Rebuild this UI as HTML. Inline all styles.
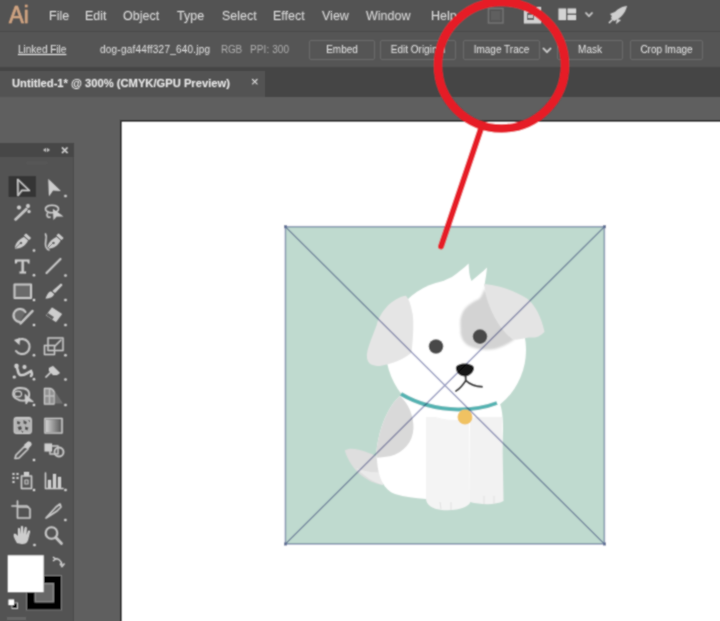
<!DOCTYPE html>
<html><head><meta charset="utf-8">
<style>
*{margin:0;padding:0;box-sizing:border-box}
html,body{width:720px;height:621px;overflow:hidden;background:#5f5f5f;font-family:"Liberation Sans",sans-serif}
.abs{position:absolute}
#menubar{left:0;top:0;width:720px;height:31px;background:#535353}
#menubar .m{position:absolute;top:9px;font-size:12.5px;color:#d6d6d6}
#ctrl{left:0;top:31px;width:720px;height:38px;background:#545454;border-top:1px solid #4a4a4a;border-bottom:1px solid #474747}
#ctrl .t{position:absolute;font-size:10px;color:#d8d8d8;top:12px;white-space:nowrap}
.btn{position:absolute;top:8px;height:20px;border:1px solid #6a6a6a;border-radius:2px;font-size:10px;color:#dcdcdc;text-align:center;line-height:18px;white-space:nowrap}
#tabbar{left:0;top:67px;width:720px;height:30px;background:#454545}
#tab{left:0;top:71px;width:265px;height:26px;background:#535353}
#artboard{left:120px;top:120px;width:600px;height:501px;background:#ffffff;border-left:2px solid #353535;border-top:2px solid #353535}
#panel{left:0;top:143px;width:74px;height:478px;background:#535353;border-right:1px solid #4c4c4c}
#phead{left:0;top:143px;width:74px;height:14px;background:#464646}
svg{position:absolute;left:0;top:0}
</style></head><body><svg width="0" height="0" style="position:absolute"><filter id="cm" x="0" y="0" width="100%" height="100%"><feConvolveMatrix order="3" kernelMatrix="1 2 1 2 8 2 1 2 1" divisor="20" edgeMode="duplicate"/></filter></svg><div id="wrap" style="position:absolute;left:0;top:0;width:720px;height:621px;filter:url(#cm)">
<div id="artboard" class="abs"></div>
<div id="menubar" class="abs">
  <div class="abs" style="left:9px;top:2px;font-size:23px;color:#d0a482;transform:scaleX(0.96);transform-origin:0 0;-webkit-text-stroke:0.6px #d0a482">Ai</div>
  <div class="m" style="left:49px">File</div>
  <div class="m" style="left:85px">Edit</div>
  <div class="m" style="left:123px">Object</div>
  <div class="m" style="left:177px">Type</div>
  <div class="m" style="left:222px">Select</div>
  <div class="m" style="left:273px">Effect</div>
  <div class="m" style="left:322px">View</div>
  <div class="m" style="left:366px">Window</div>
  <div class="m" style="left:431px">Help</div>
</div>
<div id="ctrl" class="abs">
  <div class="t" style="left:18px;text-decoration:underline">Linked File</div>
  <div class="t" style="left:100px;letter-spacing:0.22px">dog-gaf44ff327_640.jpg</div>
  <div class="t" style="left:221px;color:#a8a8a8;letter-spacing:-0.3px">RGB</div>
  <div class="t" style="left:250px;color:#a8a8a8;letter-spacing:0.1px">PPI: 300</div>
  <div class="btn" style="left:309px;width:66px">Embed</div>
  <div class="btn" style="left:380px;width:76px">Edit Original</div>
  <div class="btn" style="left:463px;width:77px">Image Trace</div>
  <div class="abs" style="left:541px;top:13px;width:12px;height:10px"><svg width="12" height="10" style="position:absolute;left:0;top:0"><path d="M2,3 L6,7 L10,3" fill="none" stroke="#d0d0d0" stroke-width="1.6"/></svg></div>
  <div class="btn" style="left:557px;width:66px">Mask</div>
  <div class="btn" style="left:630px;width:73px">Crop Image</div>
</div>
<div id="tabbar" class="abs"></div>
<div id="tab" class="abs">
  <div class="abs" style="left:12px;top:6px;font-size:11.2px;font-weight:bold;color:#e6e6e6;white-space:nowrap">Untitled-1* @ 300% (CMYK/GPU Preview)</div>
  <div class="abs" style="left:251px;top:3px;font-size:13px;color:#e0e0e0">×</div>
</div>
<div id="panel" class="abs"></div>
<div id="phead" class="abs"></div>
<svg width="720" height="621" viewBox="0 0 720 621">
 <g fill="none" stroke="#c8c8c8" stroke-width="1.5" stroke-linejoin="round" stroke-linecap="round">
 <!-- header icons -->
 <path d="M43,150 l3,-2 v4 z M50,150 l-3,-2 v4 z" fill="#bdbdbd" stroke="none"/>
 <path d="M62,147.5 l5.5,5.5 M67.5,147.5 l-5.5,5.5" stroke="#d0d0d0" stroke-width="1.5" stroke-linecap="butt"/>
 <!-- grip -->
 <path d="M27,163 h20" stroke="#616161" stroke-width="1"/>
 </g>
 <rect x="8.5" y="176" width="27.5" height="21" fill="#363636"/>
 <g fill="none" stroke="#c4c4c4" stroke-width="1.6" stroke-linejoin="round" stroke-linecap="round">
  <!-- selection -->
  <path d="M17.8,179.5 L29.3,190.5 L22,190.3 L18,195.5 Z"/>
  <!-- magic wand -->
  <path d="M15.5,219.5 L26.5,209" stroke-width="2.5"/>
  <!-- lasso -->
  <ellipse cx="52" cy="209" rx="6.5" ry="3.8"/>
  <path d="M47.5,213 C46,216 48,218 50,217"/>
  <!-- pen curvature squiggle -->
  <path d="M45.5,234 C48,238 44,242 46,247 C47,249 48,250 49,250"/>
  <!-- line -->
  <path d="M46.5,273 L60.5,259" stroke-width="2"/>
  <!-- rect -->
  <rect x="14.5" y="284.5" width="16.5" height="13.5" fill="#6a6a6a" stroke-width="2"/>
  <!-- shaper -->
  <path d="M25.5,312 A6.5,6.5 0 1 0 20,322" stroke-width="2" fill="#6a6a6a"/>
  <path d="M20.5,323.5 L32.5,311" stroke-width="2.4"/>
  <!-- rotate -->
  <path d="M17,341 A7.5,7.5 0 1 1 16,351" stroke-width="2"/>
  <!-- scale -->
  <rect x="48" y="338" width="15" height="12.5" stroke-width="1.5"/>
  <rect x="44.5" y="345.5" width="10" height="9" stroke-width="1.5"/>
  <path d="M55,346 L61,340" stroke-width="1.5"/>
  <!-- shape builder -->
  <path d="M20,388 C12,388 11,396 17,399 C22,402 28,401 29,396 C30,391 27,388 20,388 Z" stroke-width="1.8"/><ellipse cx="18" cy="394" rx="3.5" ry="2.8" stroke-width="1.2"/>
  <!-- perspective grid -->
  <path d="M54,390 L63,403.5 H54 Z" fill="#727272" stroke="none"/><path d="M44.5,388.5 H50 Q53,389 54,392 V404 H44.5 Z M44.5,396 H54 M49.5,389 V404" stroke-width="1.4"/>
  <!-- mesh -->
  <rect x="14.5" y="418" width="16.5" height="15" rx="2" stroke-width="1.8"/>
  
  <!-- gradient -->
  <rect x="45" y="418.5" width="17" height="14.5" stroke-width="1.6"/>
  <!-- eyedropper -->
  <path d="M15,458.5 L16,455 L25,446 L28,449 L19,458 Z" stroke-width="1.6"/>
  <!-- blend -->
  <circle cx="59" cy="452" r="4.5" stroke-width="1.8"/>
  <rect x="50" y="446" width="8" height="8" stroke-width="1.5"/>
  <!-- symbol sprayer -->
  <rect x="21.5" y="476" width="10" height="12.5" stroke-width="1.6"/>
  <rect x="25" y="480" width="3" height="4" stroke-width="1.2"/>
  <!-- column graph -->
  <path d="M45.5,473 V488.5 H63" stroke-width="1.5"/>
  <!-- artboard -->
  <path d="M17.5,501 V518 H30 V509 L27,506 H12" stroke-width="1.6"/>
  <path d="M17.5,507 H28" stroke-width="1.6"/>
  <!-- knife -->
  <path d="M46,518 L56,507 L60,504 L61,507 L57,511 Z" stroke-width="1.6"/>
  <!-- zoom -->
  <circle cx="51.5" cy="533" r="5.8" stroke-width="2"/>
  <path d="M55.8,537.5 L61.5,543.5" stroke-width="2.6"/>
 </g>
 <g fill="#cdcdcd" stroke="none">
  <!-- direct selection -->
  <path d="M48.3,179 L60.8,191 L53,190.5 L49,196.3 Z"/>
  <!-- wand sparkles -->
  <circle cx="19" cy="207.5" r="1.9"/><circle cx="28" cy="206" r="1.9"/><circle cx="29" cy="211.5" r="1.6"/>
  <!-- lasso arrow -->
  <path d="M53,209 L53.5,220 L56.5,216.5 L63.5,216.5 Z"/>
  <!-- pen -->
  <path d="M15,248.5 C15,244 18,240 24,237 L28,240.5 C25,246 21,248.5 15,248.5 Z"/>
  <path d="M24,235.5 L26,233.5 L31,238 L29,240 Z"/>
  <path d="M47.5,248.5 C47.5,244 50.5,240 56.5,237 L60.5,240.5 C57.5,246 53.5,248.5 47.5,248.5 Z"/>
  <path d="M56.5,235.5 L58.5,233.5 L63.5,238 L61.5,240 Z"/>
  <circle cx="21" cy="243" r="1.3" fill="#555"/><path d="M15.5,248 L20.5,243" stroke="#555" stroke-width="0.8"/>
  <circle cx="53.5" cy="243" r="1.3" fill="#555"/><path d="M48,248 L53,243" stroke="#555" stroke-width="0.8"/>
  <!-- T -->
  <path d="M15,259.5 H29.5 V263.5 H28 L27.3,261.5 H23.8 V271.5 H26 V273.5 H19.5 V271.5 H21.5 V261.5 H17.5 L16.5,263.5 H15 Z"/>
  <!-- paintbrush -->
  <path d="M61,283.5 L62.5,285 L55,293 L52.5,291 Z"/>
  <path d="M45.5,298.5 C47,296 48,292 51,291.5 L54,294 C53.5,297 49,298.5 45.5,298.5 Z"/>
  <!-- eraser -->
  <path d="M52,307.5 L62,314 L56,322 L46,315.5 Z"/>
  <path d="M48,313 L54,317 L52.5,319.5 L46.5,315.5 Z" fill="#5a5a5a"/>
  <!-- rotate arrowhead -->
  <path d="M14,340 L20,338 L19.5,345 Z"/>
  <!-- puppet warp -->
  <path d="M16.5,366.5 C18,369 17.5,372.5 19.5,374.5 C23,377 27,373 31,371 C32,373 32,375 31,376" fill="none" stroke="#cdcdcd" stroke-width="2.4" stroke-linecap="round"/><circle cx="16.5" cy="366" r="2.2"/><circle cx="24.5" cy="367" r="2"/><circle cx="14.3" cy="377" r="1.6"/>
  <!-- pin -->
  <path d="M53,366 L60,373 L57,375 L53,375 L49,371 L49,368 Z"/>
  <path d="M51,372 L45.5,377.5" stroke="#cdcdcd" stroke-width="1.6"/>
  <!-- shape builder arrow -->
  <path d="M25,394.5 L26,404 L28.3,401 L33.3,401.7 Z" stroke="#cdcdcd" stroke-width="0.8"/>
  <!-- perspective grid fill -->
  <path d="M45,389 H53 V404 H45 Z" fill="#b8b8b8" opacity="0.6"/>
  <!-- mesh fill -->
  
  <!-- eyedropper head -->
  <path d="M24,445 L28,441.5 C30,441 32,443 31.5,445 L28,449 Z"/>
  <!-- blend filled square -->
  <rect x="44.5" y="443.5" width="7.5" height="8"/>
  <!-- sprayer dots -->
  <rect x="12.5" y="473" width="2" height="2"/><rect x="16.5" y="473" width="2" height="2"/><rect x="12.5" y="477" width="2" height="2"/><rect x="16.5" y="477" width="2" height="2"/><rect x="12.5" y="481" width="2" height="2"/>
  <rect x="24" y="472" width="5" height="4"/>
  <!-- column bars -->
  <rect x="48" y="480" width="3" height="8.5"/><rect x="53" y="474" width="3" height="14.5"/><rect x="58" y="477" width="3" height="11.5"/>
  <!-- hand -->
  <path d="M17,543 C15,539 13,536 14,534 C15,533 17,535 18,536 L18,529 C18,527.5 20,527.5 20,529 L20.5,534 L21,527 C21,525.5 23,525.5 23,527 L23.5,534 L24.5,528 C25,526.5 27,527 26.8,528.5 L26.5,535 L28,531 C28.5,530 30.5,530.5 30,532 L28,540 C27,543 25,544 22,544 Z"/>
  <!-- small triangle markers -->
  <circle cx="34" cy="250.5" r="1.3"/><circle cx="65.5" cy="196" r="1.3"/>
  <circle cx="34" cy="275.3" r="1.3"/><circle cx="65.5" cy="275.5" r="1.3"/>
  <circle cx="34" cy="300" r="1.3"/><circle cx="65.5" cy="300" r="1.3"/>
  <circle cx="34" cy="325" r="1.3"/><circle cx="65.5" cy="325" r="1.3"/>
  <circle cx="34" cy="355.3" r="1.3"/><circle cx="65.5" cy="355.3" r="1.3"/>
  <circle cx="34" cy="379.2" r="1.3"/><circle cx="65.5" cy="379.5" r="1.3"/>
  <circle cx="34" cy="405" r="1.3"/><circle cx="65.5" cy="405" r="1.3"/>
  <circle cx="34" cy="460" r="1.3"/>
  <circle cx="34" cy="490" r="1.3"/><circle cx="65.5" cy="490" r="1.3"/>
  <circle cx="65.4" cy="520" r="1.3"/><circle cx="34.5" cy="545" r="1.3"/>
 </g>
 <defs><linearGradient id="gr" x1="0" x2="1" y1="0" y2="0"><stop offset="0" stop-color="#d0d0d0"/><stop offset="1" stop-color="#5a5a5a"/></linearGradient></defs>
 <rect x="46" y="419.5" width="15" height="12.5" fill="url(#gr)"/>
 <!-- fill/stroke -->
 <rect x="26" y="575" width="36" height="35.5" fill="#7a7a7a"/>
 <rect x="27" y="576" width="34" height="33.5" fill="#000000"/>
 <rect x="34.5" y="583" width="19.5" height="19.5" fill="#858585"/>
 <rect x="36" y="584.5" width="16.5" height="16.5" fill="#676767"/>
 <rect x="7.5" y="555" width="36.5" height="37.5" fill="#8a8a8a"/>
 <rect x="8" y="555.5" width="35.5" height="36.5" fill="#ffffff"/>
 <path d="M54,559 C58,558 61,560 62,565 M60,563.5 L62,566.5 L64.5,563.5 M53,557 L55.5,559 L53,561" stroke="#c8c8c8" stroke-width="1.4" fill="none"/>
 <rect x="12" y="603" width="5.5" height="5.5" fill="#111" stroke="#bbb" stroke-width="1"/>
 <rect x="8.5" y="599.5" width="5.5" height="5.5" fill="#fff"/>
 
<rect x="7" y="617" width="19" height="3" fill="#666"/>
<rect x="15" y="419" width="15.5" height="13.5" fill="#b4b4b4"/>
 <path d="M17,421 l3.5,1 l-1,2.5 l-2.5,-0.5 z M23.5,420 l3.5,2 l-1,2.5 l-2.5,-1 z M17.5,427 l3.5,-1 l1,3 l-3,1.5 z M25,426.5 l3.5,1 l-1,3 l-2.5,-1 z M21,430.5 l2.5,1 l-1,1.5 z M28,420 l2,0.5 v2 z" fill="#4e4e4e"/>
</svg>

<svg width="720" height="621" viewBox="0 0 720 621"><defs><clipPath id="bc"><path d="M401,395 C391,403 382,420 378,441 C376,450 376.5,455 377,460 C378,478 384,490 395,494 C405,497 415,498 426,499 L500,501 L503,430 C503,412 501,404 497,398 Z"/></clipPath><filter id="fz" x="-10%" y="-10%" width="120%" height="120%"><feGaussianBlur stdDeviation="1"/></filter></defs>
 <rect x="285.4" y="226.7" width="319" height="317.3" fill="#bfdacf"/>
 <!-- tail -->
 <path d="M344.8,450.5 C352,446 365,451 378,457 L383,485 C368,483 351,471 344.8,450.5 Z" fill="#dedede"/>
 <path d="M356,468 C364,476 373,482 383,485 L381,472 C372,473 363,471 356,468 Z" fill="#eaeaea"/>
 <!-- body -->
 <path d="M401,395 C391,403 382,420 378,441 C376,450 376.5,455 377,460 C378,478 384,490 395,494 C405,497 415,498 426,499 L500,501 L503,430 C503,412 501,404 497,398 Z" fill="#ffffff"/>
 <!-- haunch patch -->
 <path d="M400,396 C409,404 413.5,416 413.5,428 C413,442 404,452 391,456 C386,457 378,458 370,458 L370,400 Z" fill="#d9d9d9" clip-path="url(#bc)"/>
 <!-- front legs -->
 <path d="M426,417 L469,417 L470,503 C466,509 452,511 442,510 C432,509 426,505 426,498 Z" fill="#f4f4f4"/>
 <path d="M470,417 L502,417 L503.5,501 C496,505 482,505 470,502 Z" fill="#f2f2f2"/>
 <path d="M440,502 L441,509 M451,502 L451,510 M484,496 L484,504 M494,496 L494,504" stroke="#e0e0e0" stroke-width="1" fill="none"/>
 <!-- head -->
 <circle cx="456" cy="350" r="70" fill="#ffffff"/>
 <!-- tufts -->
 <path d="M428,292 C436,284 445,280 452,277 C458,273 464,268 468.6,263.6 C469,270 469,276 471.5,281 C477,276 483,272 487,267.5 C486,278 484,288 482,297 L440,300 Z" fill="#ffffff"/>
 <!-- eye patch -->
 <path d="M479,299 C470,303 464,308 462,314 C459,321 461,327 460.5,332 C461,339 465,344 469,346 C478,350 487,350.5 495,349 C503,347 510,343 515,339 C502,330 491,312 485,288 C483,293 481,297 479,299 Z" fill="#d3d3d3" filter="url(#fz)"/>
 <!-- ears -->
 <path d="M405.8,295.8 C392,298 380,312 376.7,325 C372,338 366,350 367,358 C368,364 372,366 380,366 C392,364 403,360 411.4,352.8 C413,340 414,325 412.8,315 C411,305 409,299 405.8,295.8 Z" fill="#e5e5e5"/>
 <path d="M484,284 C495,285 510,288 527,298.6 C535,305 541,316 544.5,331.7 C540,337 535,338 529,337.5 C522,339 516,340 513,339.5 C500,330 488,310 484,284 Z" fill="#e4e4e4"/>
 <!-- eyes -->
 <circle cx="436" cy="346.5" r="7.3" fill="#4a4a4a"/>
 <circle cx="480" cy="336.6" r="7.3" fill="#4a4a4a"/>
 <!-- nose -->
 <path d="M455.8,368 C456,362 473.5,362 474,368 C474,373 468,376.5 465,376.5 C461,376.5 455.8,373 455.8,368 Z" fill="#141414"/>
 <!-- mouth -->
 <path d="M465.6,376 L465.8,380.5 C463,385 460,388.5 456,391 M465.8,380.5 C470,384.5 476,386.5 482,386.7" stroke="#2e2e2e" stroke-width="2" fill="none" stroke-linecap="round"/>
 <!-- collar -->
 <path d="M401,394 C418,404 436,409 458,409.5 C474,409.5 488,406.5 497,403" stroke="#55b3b2" stroke-width="4" fill="none"/>
 <circle cx="465" cy="417" r="7.5" fill="#f0c262"/>
 <!-- bounding -->
 <g style="mix-blend-mode:multiply">
 <rect x="285.4" y="226.7" width="319" height="317.3" fill="none" stroke="#9ca6c4" stroke-width="1.6"/>
 <line x1="285.4" y1="226.7" x2="604.4" y2="544" stroke="#9da1c4" stroke-width="1.5"/>
 <line x1="604.4" y1="226.7" x2="285.4" y2="544" stroke="#9da1c4" stroke-width="1.5"/>
 </g>
 <rect x="284" y="225.2" width="3" height="3" fill="#5f6f96"/>
 <rect x="603" y="225.2" width="3" height="3" fill="#5f6f96"/>
 <rect x="284" y="542.5" width="3" height="3" fill="#5f6f96"/>
 <rect x="603" y="542.5" width="3" height="3" fill="#5f6f96"/>
</svg>

<svg width="720" height="621" viewBox="0 0 720 621">
 <!-- dim icon 1 -->
 <rect x="488.5" y="8.5" width="14.5" height="14.5" fill="none" stroke="#737373" stroke-width="1.5"/>
 <rect x="491" y="11" width="9.5" height="9.5" fill="#5f5f5f"/>
 <!-- icon 2 -->
 <rect x="524" y="7" width="17" height="16.5" fill="#d2d2d2"/>
 <path d="M527,13 H534 V20 H527 Z" fill="#5a5a5a"/>
 <path d="M528,15 H533 V18 H528 Z" fill="#c8c8c8"/>
 <path d="M535,10 H540 V13 H535 Z" fill="#707070"/>
 <!-- workspace -->
 <rect x="558.5" y="8.5" width="7.5" height="11.5" fill="#d4d4d4"/>
 <rect x="567.5" y="8.5" width="8.5" height="5" fill="#d4d4d4"/>
 <rect x="567.5" y="15" width="8.5" height="5" fill="#d4d4d4"/>
 <path d="M585.5,12.5 L589,16 L592.5,12.5" fill="none" stroke="#c8c8c8" stroke-width="1.6"/>
 <!-- rocket -->
 <path d="M627,6 C620,7 614,11 611,18 L614,21 C621,18 625,13 627,6 Z" fill="#cfcfcf"/>
 <path d="M610,14 L615,12 L613,17 Z M617,19 L616,24 L621,20 Z" fill="#cfcfcf"/>
 <path d="M609,23 L613,19" stroke="#cfcfcf" stroke-width="1.5"/>
</svg>

<svg width="720" height="621" viewBox="0 0 720 621">
 <ellipse cx="501.5" cy="65.2" rx="63.5" ry="63.2" fill="none" stroke="#e61b25" stroke-width="8.5"/>
 <line x1="480.5" y1="130" x2="441" y2="246.5" stroke="#e61b25" stroke-width="6" stroke-linecap="round"/>
</svg>

</div></body></html>
